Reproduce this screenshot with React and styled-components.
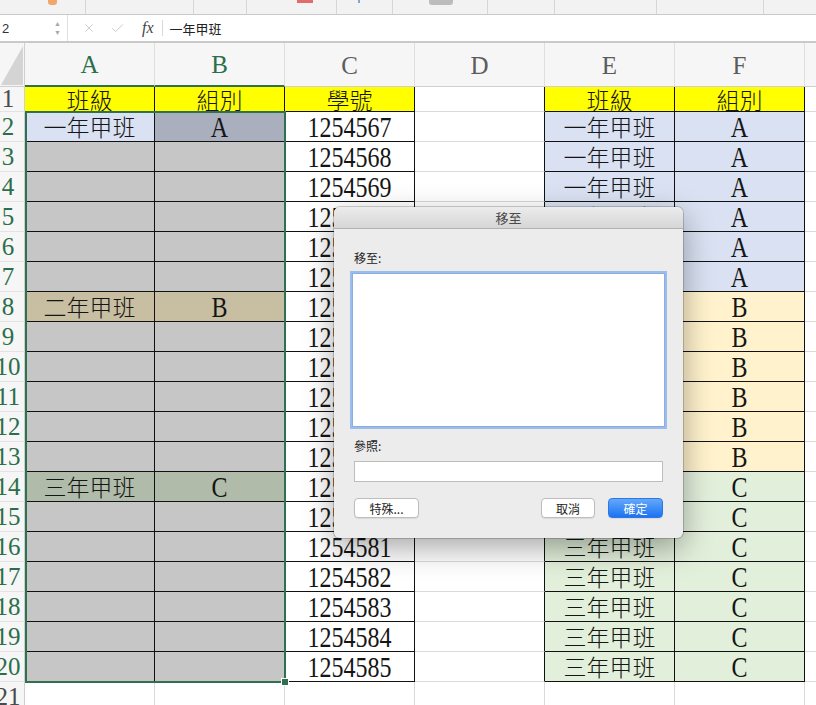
import React from "react";
import styled, { createGlobalStyle } from "styled-components";
import { X, Check } from "lucide-react";

const GlobalStyle = createGlobalStyle`
  html, body {
    margin: 0;
    padding: 0;
    background: #ffffff;
    overflow: hidden;
  }
  body {
    font-family: "Noto Sans CJK TC", "Liberation Sans", sans-serif;
  }
`;

const YEL = "#ffff00";
const BLUE = "#d9e1f2";
const TAN = "#fff2cc";
const GRN = "#e2efda";
const SEL = "#c6c6c6";
const SEL_BLUE = "#a9afbd";
const SEL_TAN = "#c8bea2";
const SEL_GRN = "#b1bba9";
const GREEN = "#2f7050";
const GRID = "#dadada";

const Page = styled.div`
  position: relative;
  width: 816px;
  height: 705px;
  overflow: hidden;
`;

/* ---- ribbon remnants ---- */
const Ribbon = styled.div`
  display: flex;
  height: 14px;
  background: #f2f2f2;
  border-bottom: 1px solid #c9c9c9;
`;

const RibbonGroup = styled.div`
  width: ${p => p.$w}px;
  flex-shrink: 0;
  border-right: 1px solid #d6d6d6;
  display: flex;
  align-items: flex-start;
  padding-left: ${p => p.$pad || 0}px;
  box-sizing: border-box;
`;

const RibbonChip = styled.div`
  width: ${p => p.$w}px;
  height: ${p => p.$h}px;
  background: ${p => p.$c};
  border-radius: 0 0 ${p => p.$r || 0}px ${p => p.$r || 0}px;
`;

/* ---- formula bar ---- */
const FormulaBar = styled.div`
  display: flex;
  align-items: center;
  height: 26px;
  background: #ffffff;
  border-bottom: 2px solid #c9c9c9;
  font-family: "Noto Sans CJK TC", "Liberation Sans", sans-serif;
`;

const NameBox = styled.div`
  width: 68px;
  height: 100%;
  display: flex;
  align-items: center;
  justify-content: space-between;
  padding: 0 6px 0 2px;
  box-sizing: border-box;
  border-right: 1px solid #dedede;
  font-family: "Liberation Sans", sans-serif;
  font-size: 13px;
  color: #333;
`;

const Spinner = styled.div`
  display: flex;
  flex-direction: column;
  gap: 2px;
  color: #a8a8a8;
  font-size: 7px;
  line-height: 7px;
`;

const BarIcons = styled.div`
  display: flex;
  align-items: center;
  gap: 14px;
  padding-left: 14px;
  color: #c4c4c4;
`;

const Fx = styled.span`
  font-family: "Liberation Serif", serif;
  font-style: italic;
  font-size: 16px;
  color: #444;
  margin-left: 3px;
  padding-right: 8px;
  border-right: 1px solid #d8d8d8;
  line-height: 16px;
`;

const FormulaText = styled.span`
  padding-left: 7px;
  font-size: 13px;
  color: #222;
`;

/* ---- sheet ---- */
const Sheet = styled.div`
  position: relative;
  display: grid;
  grid-template-columns: 25px repeat(7, 130px);
  grid-template-rows: 44px 25px repeat(19, 30px) 30px;
`;

const Corner = styled.div`
  background: #f6f6f6;
  border-right: 1px solid #cfcfcf;
  border-bottom: 1px solid #cfcfcf;
  position: relative;
  &::after {
    content: "";
    position: absolute;
    inset: 3px 1px 1px 1px;
    background: #d4d4d4;
    clip-path: polygon(100% 0, 100% 100%, 0 100%);
  }
`;

const ColHead = styled.div`
  display: flex;
  align-items: center;
  justify-content: center;
  background: #f6f6f6;
  border-right: 1px solid #dedede;
  border-bottom: ${p => (p.$sel ? `2px solid ${GREEN}` : "1px solid #cfcfcf")};
  font-family: "Liberation Serif", serif;
  font-size: 25px;
  color: ${p => (p.$sel ? "#2c6e4b" : "#5c5c5c")};
  padding-top: 2px;
`;

const RowHead = styled.div`
  background: #f6f6f6;
  border-right: 1px solid #cfcfcf;
  border-bottom: 1px solid #e3e3e3;
  overflow: hidden;
  display: flex;
  align-items: center;
  font-family: "Liberation Serif", serif;
  font-size: 25px;
  color: ${p => (p.$sel ? "#2c6e4b" : "#4a4a4a")};
`;

const RowNum = styled.span`
  width: 40px;
  flex-shrink: 0;
  margin-left: -12px;
  text-align: center;
`;

const Cell = styled.div`
  display: flex;
  align-items: center;
  justify-content: center;
  overflow: hidden;
  white-space: nowrap;
  background: ${p => p.$fill};
  border-right: 1px solid ${p => p.$rb};
  border-bottom: 1px solid ${p => p.$bb};
  color: #151515;
  font-family: ${p =>
    p.$latin
      ? '"Liberation Serif", serif'
      : '"Noto Sans CJK TC", "Liberation Serif", sans-serif'};
  font-size: ${p => (p.$latin ? "24px" : "23px")};
  font-weight: ${p => (p.$latin ? 400 : 300)};
  line-height: 1;
`;

const Tall = styled.span`
  display: inline-block;
  transform: scaleY(1.22);
`;

const Selection = styled.div`
  position: absolute;
  grid-row: 3 / 22;
  grid-column: 2 / 4;
  top: -1px;
  left: 0;
  right: -1px;
  bottom: -1px;
  border: 2px solid ${GREEN};
  pointer-events: none;
`;

const FillHandle = styled.div`
  position: absolute;
  right: -5px;
  bottom: -5px;
  width: 6px;
  height: 6px;
  background: ${GREEN};
  border: 1px solid #fff;
`;

/* ---- dialog ---- */
const Dialog = styled.div`
  position: absolute;
  left: 334px;
  top: 207px;
  width: 349px;
  height: 331px;
  background: #ececec;
  border-radius: 6px;
  box-shadow: 0 0 0 1px rgba(0, 0, 0, 0.18), 0 10px 30px rgba(0, 0, 0, 0.35);
  display: flex;
  flex-direction: column;
  overflow: hidden;
  font-family: "Noto Sans CJK TC", "Liberation Sans", sans-serif;
`;

const TitleBar = styled.div`
  height: 21px;
  flex-shrink: 0;
  display: flex;
  align-items: center;
  justify-content: center;
  background: linear-gradient(#ececec, #d6d6d6);
  border-bottom: 1px solid #b3b3b3;
  font-size: 13px;
  color: #4b4b4b;
`;

const DialogBody = styled.div`
  display: flex;
  flex-direction: column;
  padding: 22px 20px 20px 20px;
  flex: 1;
`;

const Label = styled.div`
  font-size: 12px;
  line-height: 14px;
  color: #222;
  margin-bottom: ${p => p.$mb}px;
`;

const ListBox = styled.div`
  margin: 0 -2px;
  height: 152px;
  background: #fff;
  border: 1px solid #8aaee3;
  box-shadow: 0 0 0 2px #9bbcec;
  margin-top: 2px;
  margin-bottom: 12px;
`;

const TextInput = styled.div`
  height: 19px;
  background: #fff;
  border: 1px solid #bdbdbd;
  margin-bottom: 16px;
`;

const ButtonRow = styled.div`
  display: flex;
  align-items: center;
`;

const Button = styled.div`
  width: ${p => p.$w}px;
  height: 20px;
  box-sizing: border-box;
  display: flex;
  align-items: center;
  justify-content: center;
  border-radius: 4px;
  font-size: 12px;
  margin-left: ${p => p.$ml || 0}px;
  color: ${p => (p.$primary ? "#fff" : "#222")};
  background: ${p =>
    p.$primary ? "linear-gradient(#64a8fa, #1b72f2)" : "#ffffff"};
  border: 1px solid ${p => (p.$primary ? "#2a78e8" : "#bdbdbd")};
  box-shadow: 0 1px 1px rgba(0, 0, 0, 0.08);
`;

const Spacer = styled.div`
  flex: 1;
`;

const COLS = ["A", "B", "C", "D", "E", "F", "G"];

function groupOf(r) {
  if (r <= 7) return { name: "一年甲班", letter: "A", fill: BLUE, sel: SEL_BLUE };
  if (r <= 13) return { name: "二年甲班", letter: "B", fill: TAN, sel: SEL_TAN };
  return { name: "三年甲班", letter: "C", fill: GRN, sel: SEL_GRN };
}

function cellData(r, c) {
  const inTable = r >= 1 && r <= 20 && (c <= 2 || c === 4 || c === 5);
  let text = "";
  let fill = "#ffffff";
  let latin = false;
  if (r === 1) {
    const heads = ["班級", "組別", "學號", "", "班級", "組別", ""];
    text = heads[c];
    if (inTable) fill = YEL;
  } else if (r <= 20) {
    const g = groupOf(r);
    const start = r === 2 || r === 8 || r === 14;
    if (c === 0 || c === 1) {
      fill = SEL;
      if (start) {
        text = c === 0 ? g.name : g.letter;
        fill = r === 2 && c === 0 ? BLUE : g.sel;
      }
      latin = c === 1;
    } else if (c === 2) {
      text = String(1254567 + r - 2);
      latin = true;
    } else if (c === 4) {
      text = g.name;
      fill = g.fill;
    } else if (c === 5) {
      text = g.letter;
      fill = g.fill;
      latin = true;
    }
  }
  const rb = inTable || (c === 3 && r <= 20) ? "#111" : GRID;
  const bb = inTable ? "#111" : GRID;
  return { text, fill, latin, rb, bb };
}

function Row({ r }) {
  const sel = r >= 2 && r <= 20;
  return (
    <>
      <RowHead $sel={sel}>
        <RowNum>{r}</RowNum>
      </RowHead>
      {COLS.map((_, c) => {
        const d = cellData(r, c);
        return (
          <Cell key={c} $fill={d.fill} $rb={d.rb} $bb={d.bb} $latin={d.latin}>
            {d.latin ? <Tall>{d.text}</Tall> : d.text}
          </Cell>
        );
      })}
    </>
  );
}

const ribbonGroups = [
  { w: 86, pad: 48, chip: { w: 9, h: 5, c: "#f0a86a", r: 3 } },
  { w: 108 },
  { w: 53 },
  { w: 90, pad: 50, chip: { w: 16, h: 3, c: "#e26b6b" } },
  { w: 56, pad: 21, chip: { w: 2, h: 3, c: "#8aa3c8" } },
  { w: 95, pad: 36, chip: { w: 24, h: 5, c: "#bcbcbc", r: 3 } },
  { w: 67 },
  { w: 102 },
  { w: 107 },
  { w: 60 },
];

export default function App() {
  const rows = Array.from({ length: 21 }, (_, i) => i + 1);
  return (
    <Page>
      <GlobalStyle />
      <Ribbon>
        {ribbonGroups.map((g, i) => (
          <RibbonGroup key={i} $w={g.w} $pad={g.pad}>
            {g.chip && <RibbonChip $w={g.chip.w} $h={g.chip.h} $c={g.chip.c} $r={g.chip.r} />}
          </RibbonGroup>
        ))}
      </Ribbon>

      <FormulaBar>
        <NameBox>
          <span>2</span>
          <Spinner>
            <span>▲</span>
            <span>▼</span>
          </Spinner>
        </NameBox>
        <BarIcons>
          <X size={14} strokeWidth={1.4} />
          <Check size={15} strokeWidth={1.4} />
          <Fx>fx</Fx>
        </BarIcons>
        <FormulaText>一年甲班</FormulaText>
      </FormulaBar>

      <Sheet>
        <Corner />
        {COLS.map((l, i) => (
          <ColHead key={l} $sel={i < 2}>
            {l}
          </ColHead>
        ))}
        {rows.map(r => (
          <Row key={r} r={r} />
        ))}
        <Selection>
          <FillHandle />
        </Selection>
      </Sheet>

      <Dialog>
        <TitleBar>移至</TitleBar>
        <DialogBody>
          <Label $mb={6}>移至:</Label>
          <ListBox />
          <Label $mb={8}>參照:</Label>
          <TextInput />
          <ButtonRow>
            <Button $w={65}>特殊...</Button>
            <Spacer />
            <Button $w={54}>取消</Button>
            <Button $w={55} $ml={13} $primary>
              確定
            </Button>
          </ButtonRow>
        </DialogBody>
      </Dialog>
    </Page>
  );
}
